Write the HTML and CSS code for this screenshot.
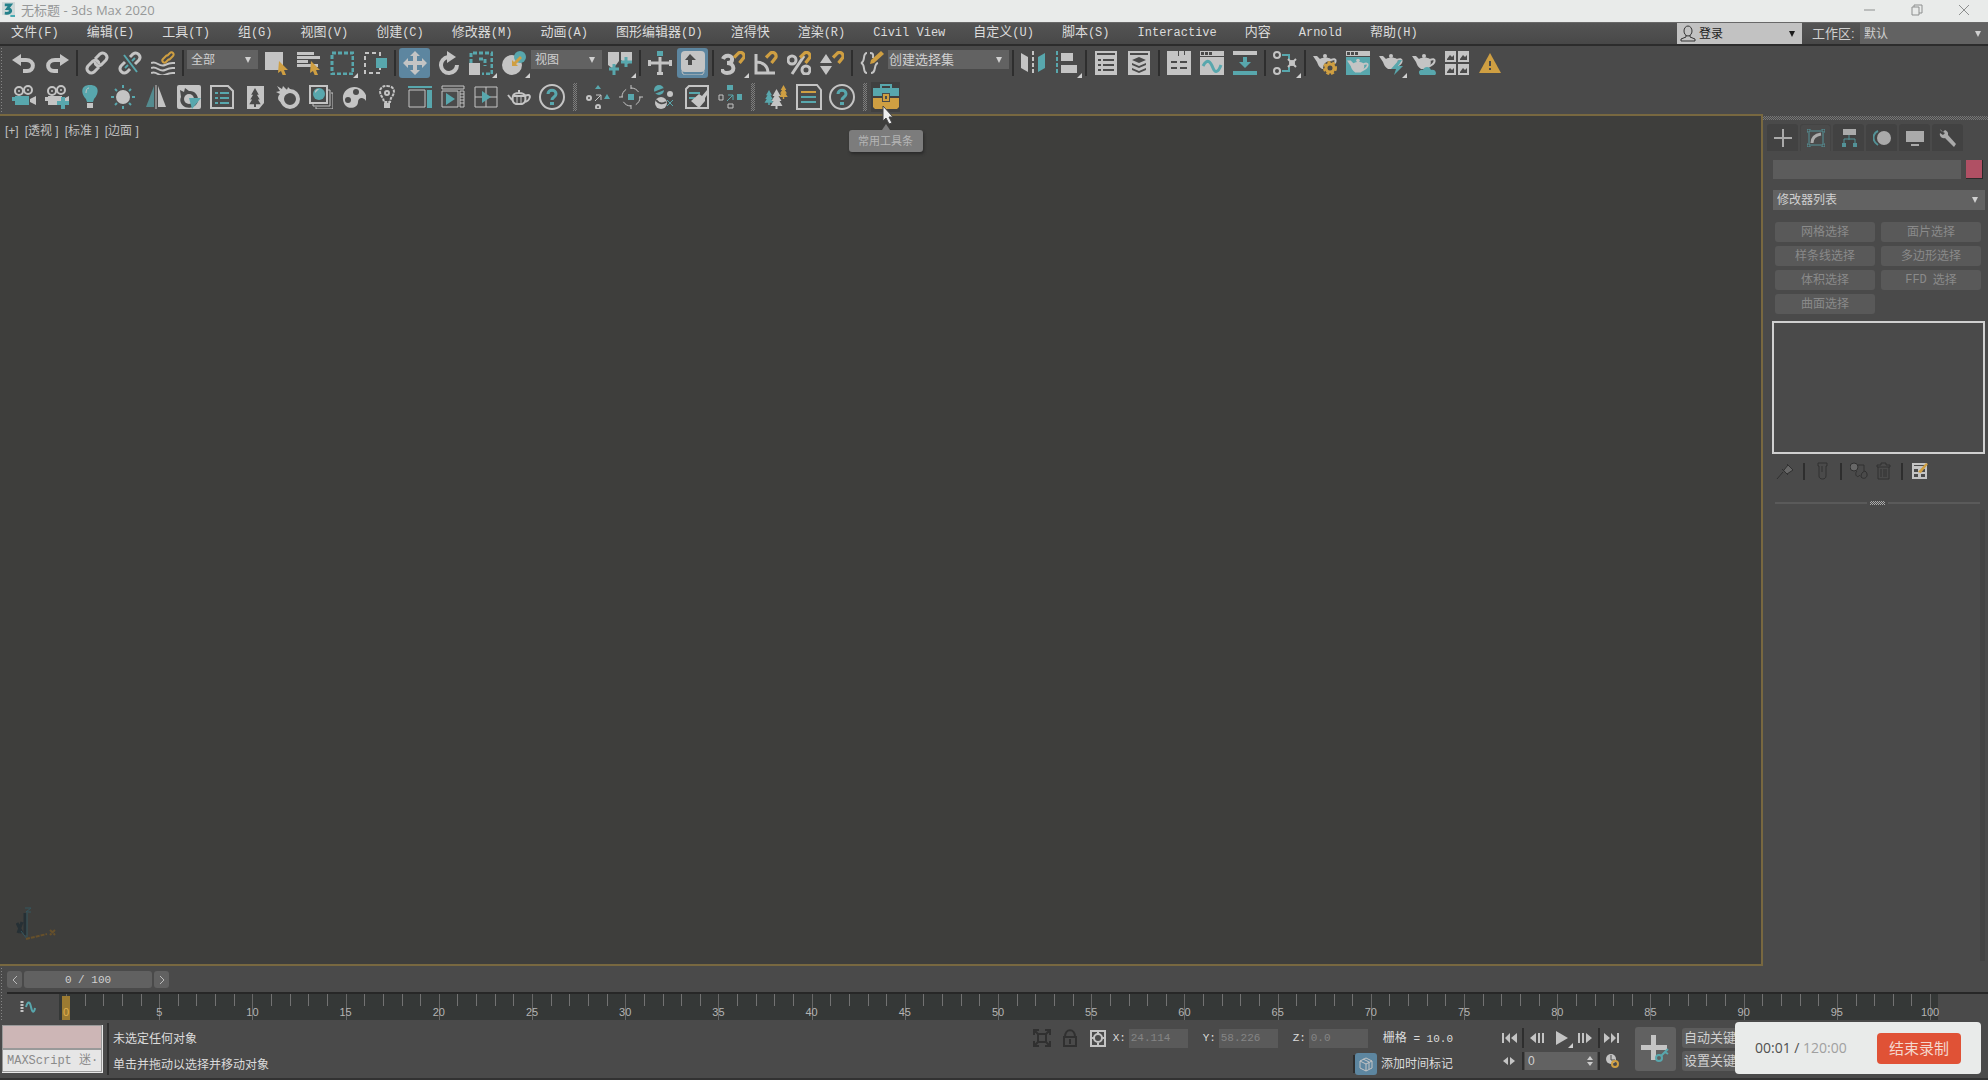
FILE: index.html
```
<!DOCTYPE html>
<html lang="zh-CN">
<head>
    <meta charset="UTF-8">
    <meta name="viewport" content="width=device-width, initial-scale=1.0">
    <title>无标题 - 3ds Max 2020</title>
    <link rel="stylesheet" href="styles.css">
</head>
<body>
    <svg class="defs" aria-hidden="true">
        <symbol id="teapot" viewBox="0 0 24 24">
            <path class="w" d="M0 5h4l3 3c3-2 8-2 11 0 2 4 0 8-3 10H9c-3-2-4-4-5-7z"/>
            <circle class="w" cx="12" cy="5" r="2"/>
            <path class="ws" d="M18 9c6-3 7 3-2 7"/>
        </symbol>
        <symbol id="magnet" viewBox="0 0 12 12">
            <path class="gs" stroke-width="3" d="M1 6l4-4c3-2 6 1 5 4l-4 5"/>
        </symbol>
        <symbol id="camera" viewBox="0 0 24 24">
            <circle class="ws" cx="7" cy="6" r="4"/><circle class="ws" cx="16" cy="5" r="4"/>
            <circle class="w" cx="7" cy="6" r="1"/><circle class="w" cx="16" cy="5" r="1"/>
            <path d="M3 11h14v9H3zM0 12h3v4H0z"/>
            <path class="w" d="M18 14l6-3v9l-6-3z"/>
        </symbol>
        <symbol id="help" viewBox="0 0 26 26">
            <circle class="ws" cx="13" cy="13" r="12"/>
            <path class="ts" stroke-width="3" d="M9 10c0-5 8-5 8 0 0 3-4 3-4 6"/><path class="t" d="M11 18h4v3h-4z"/>
        </symbol>
        <symbol id="tree" viewBox="0 0 12 20">
            <path d="M6 0l4 7H8l3 5H9l3 5H7v3H5v-3H0l3-5H1l3-5H2z"/>
        </symbol>
    </svg>

    <header class="titlebar">
        <svg class="logo" viewBox="0 0 14 16"><path fill="#cfd8d8" d="M0 0h14v14H0z"/><path fill="none" stroke="#23808a" stroke-width="3" d="M3 3h6l-3 4c5 0 5 6-3 5"/><path fill="#39a5ad" d="M9 14h5v2H9z"/></svg>
        <h1>无标题 - 3ds Max 2020</h1>
        <div class="window-buttons">
            <button aria-label="最小化"><svg viewBox="0 0 12 12"><path d="M0 6h11"/></svg></button>
            <button aria-label="还原"><svg viewBox="0 0 12 12"><path d="M1 3h7v8H1zM3 3V1h8v8H8"/></svg></button>
            <button aria-label="关闭"><svg viewBox="0 0 12 12"><path d="M1 1l10 10M11 1L1 11"/></svg></button>
        </div>
    </header>

    <div class="menubar">
        <nav class="menu">
            <a href="#">文件<span>(F)</span></a>
            <a href="#">编辑<span>(E)</span></a>
            <a href="#">工具<span>(T)</span></a>
            <a href="#">组<span>(G)</span></a>
            <a href="#">视图<span>(V)</span></a>
            <a href="#">创建<span>(C)</span></a>
            <a href="#">修改器<span>(M)</span></a>
            <a href="#">动画<span>(A)</span></a>
            <a href="#">图形编辑器<span>(D)</span></a>
            <a href="#">渲得快</a>
            <a href="#">渲染<span>(R)</span></a>
            <a href="#"><span>Civil View</span></a>
            <a href="#">自定义<span>(U)</span></a>
            <a href="#">脚本<span>(S)</span></a>
            <a href="#"><span>Interactive</span></a>
            <a href="#">内容</a>
            <a href="#"><span>Arnold</span></a>
            <a href="#">帮助<span>(H)</span></a>
        </nav>
        <button class="login">
            <svg viewBox="0 0 16 18"><ellipse cx="8" cy="6" rx="4" ry="5"/><path d="M6 10v2l-5 2v2h14v-2l-5-2v-2"/></svg>
            登录
        </button>
        <label class="workspace-label" for="workspace">工作区:</label>
        <div class="combo workspace"><select id="workspace"><option>默认</option></select></div>
    </div>

    <div class="toolbars">
        <div class="toolbar">
            <button aria-label="撤消"><svg viewBox="0 0 24 24"><path class="w" d="M0 9l9-6v12z"/><path class="ws" stroke-width="4" d="M7 9h7c9 0 9 11 1 11h-4"/></svg></button>
            <button aria-label="重做"><svg viewBox="0 0 24 24"><path class="w" d="M24 9l-9-6v12z"/><path class="ws" stroke-width="4" d="M17 9h-7c-9 0-9 11-1 11h4"/></svg></button>
            <i class="sep"></i>
            <button aria-label="链接"><svg viewBox="0 0 24 24"><path class="ws" stroke-width="3" d="M10 8l5-5c4-3 9 2 6 6l-5 5c-3 2-6 0-6-3M14 16l-5 5c-4 3-9-2-6-6l5-5c3-2 6 0 6 3"/></svg></button>
            <button aria-label="取消链接"><svg viewBox="0 0 24 24"><path class="ws" stroke-width="3" d="M12 6l3-3c4-3 9 2 6 6l-4 4M12 18l-3 3c-4 3-9-2-6-6l4-4"/><path class="ts" d="M6 4l13 17M17 7l-3 3M10 14l-3 3"/></svg></button>
            <button aria-label="绑定到空间扭曲"><svg viewBox="0 0 24 24"><path class="ws" d="M0 12c6-3 8 5 14 2s7-2 10-2M0 17c6-3 8 5 14 2s7-2 10-2M0 22c6-3 8 5 14 2s7-2 10-2"/><path class="gs" d="M16 5l3-3c2-2 5 1 3 3l-4 4M18 8l-3 3c-2 2-5-1-3-3l4-4"/></svg></button>
            <i class="sep"></i>
            <div class="combo filter"><select aria-label="选择过滤器"><option>全部</option></select></div>
            <button aria-label="选择对象"><svg viewBox="0 0 24 24"><path class="w" d="M1 1h18v18H1z"/><path class="g" d="M15 10l9 9h-4l2 5-3 1-2-5-3 2z"/></svg></button>
            <button aria-label="按名称选择"><svg viewBox="0 0 24 24"><path class="w" d="M0 1h17v3H0zM0 5h23v3H0zM0 9h11v3H0zM0 13h21v3H0z"/><path class="g" d="M14 10l9 9h-4l2 5-3 1-2-5-3 2z"/></svg></button>
            <button class="flyout" aria-label="矩形选择区域"><svg viewBox="0 0 24 24"><path class="ts" stroke-width="3" stroke-dasharray="4 2" d="M2 2h21v21H2z"/></svg></button>
            <button aria-label="窗口/交叉"><svg viewBox="0 0 24 24"><path class="ws" stroke-dasharray="4 3" d="M2 2h15v20H2z"/><path class="t" d="M13 7h11v10H13z"/></svg></button>
            <i class="sep"></i>
            <button class="active" aria-label="选择并移动"><svg viewBox="0 0 24 24"><path class="w" d="M12 0l5 5h-3v5h5V7l5 5-5 5v-3h-5v5h3l-5 5-5-5h3v-5H5v3l-5-5 5-5v3h5V5H7z"/></svg></button>
            <button aria-label="选择并旋转"><svg viewBox="0 0 24 24"><path class="ws" stroke-width="4" d="M12 6a8 8 0 1 0 9 8"/><path class="w" d="M11 0l9 6-9 6z"/></svg></button>
            <button class="flyout" aria-label="选择并缩放"><svg viewBox="0 0 24 24"><path class="ts" stroke-width="3" stroke-dasharray="4 2" d="M2 12V2h21v21H13M10 8h6v7"/><path class="w" d="M0 12h11v12H0z"/></svg></button>
            <button class="flyout" aria-label="选择并放置"><svg viewBox="0 0 24 24"><circle class="w" cx="10" cy="14" r="10"/><circle class="t" cx="18" cy="6" r="6"/><path class="g" d="M18 5l2 2-6 6 2 2h-6V9l2 2z"/></svg></button>
            <div class="combo filter"><select aria-label="参考坐标系"><option>视图</option></select></div>
            <button class="flyout" aria-label="使用轴点中心"><svg viewBox="0 0 24 24"><path class="w" d="M0 1h11v9l-3 4-4 3-4-3zM13 1h11v10l-6 2-5-4z"/><path class="ts" stroke-width="3" d="M6 13v11M1 18h10M18 6v10M13 11h11"/></svg></button>
            <i class="sep"></i>
            <button aria-label="选择并操纵"><svg viewBox="0 0 24 24"><path class="ws" stroke-width="3" d="M0 12h24M12 6v18"/><path class="w" d="M0 9h3v6H0zM21 9h3v6h-3zM9 21h6v3H9z"/><path class="t" d="M9 0h6v5H9z"/></svg></button>
            <button class="active" aria-label="键盘快捷键覆盖切换"><svg viewBox="0 0 24 24"><rect class="w" x="0" y="0" width="24" height="21" rx="4"/><path class="ws" stroke-width="1" d="M1 20c0 3 2 4 4 4h14c3 0 4-2 4-4"/><path fill="#4a4a4a" d="M9 3l6 6h-4v5H7V9H4z"/></svg></button>
            <i class="sep"></i>
            <button class="flyout" aria-label="捕捉开关"><svg viewBox="0 0 24 24"><path class="ws" stroke-width="4" d="M2 8c2-5 10-4 9 1 0 2-2 3-5 3 8 0 9 10 0 10-3 0-5-2-5-4"/><use href="#magnet" x="12" y="0" width="13" height="13"/></svg></button>
            <button aria-label="角度捕捉"><svg viewBox="0 0 24 24"><path class="ws" stroke-width="3" d="M2 3v19h19M2 11c7 0 12 4 12 11"/><use href="#magnet" x="11" y="0" width="13" height="13"/></svg></button>
            <button aria-label="百分比捕捉"><svg viewBox="0 0 24 24"><circle class="ws" stroke-width="3" cx="5" cy="9" r="4"/><circle class="ws" stroke-width="3" cx="19" cy="19" r="4"/><path class="ws" stroke-width="3" d="M5 23L17 5"/><use href="#magnet" x="12" y="0" width="13" height="13"/></svg></button>
            <button aria-label="微调器捕捉"><svg viewBox="0 0 24 24"><path class="w" d="M0 12l6-9 6 9zM0 15h12l-6 9z"/><use href="#magnet" x="12" y="0" width="13" height="13"/></svg></button>
            <i class="sep"></i>
            <button aria-label="编辑命名选择集"><svg viewBox="0 0 24 24"><path class="ws" d="M7 2C2 2 6 11 1 12c5 1 1 10 6 10M11 22c6 0 2-9 7-10M10 2c4 0 3 2 3 5"/><path class="g" d="M10 13l1-4 10-9 3 3-10 9z"/></svg></button>
            <div class="combo sets"><select aria-label="命名选择集"><option>创建选择集</option></select></div>
            <i class="sep"></i>
            <button aria-label="镜像"><svg viewBox="0 0 24 24"><path class="w" d="M0 2l7 4v15l-7-4z"/><path class="t" d="M24 2l-7 4v15l7-4z"/><path class="ws" stroke-dasharray="4 2" d="M12 0v24"/></svg></button>
            <button class="flyout" aria-label="对齐"><svg viewBox="0 0 24 24"><path class="ts" stroke-dasharray="4 2" d="M3 0v24"/><path class="w" d="M7 2h12v8H7zM7 14h16v8H7z"/></svg></button>
            <i class="sep"></i>
            <button aria-label="场景资源管理器"><svg viewBox="0 0 24 24"><path class="w" d="M1 0h22v24H1z"/><path class="bg" d="M3 2h18v2H3zM4 8h3v2H4zM9 8h11v2H9zM4 13h3v2H4zM9 13h11v2H9zM4 18h3v2H4zM9 18h11v2H9z"/></svg></button>
            <button aria-label="层资源管理器"><svg viewBox="0 0 24 24"><path class="w" d="M1 0h22v24H1z"/><path class="bg" d="M3 2h18v2H3zM12 6l7 3-7 3-7-3zM5 12l7 3 7-3v2l-7 3-7-3zM5 17l7 3 7-3v2l-7 3-7-3z"/></svg></button>
            <i class="sep"></i>
            <button aria-label="功能区"><svg viewBox="0 0 24 24"><path class="w" d="M0 0h11v5h1V0h5v4h1V0h6v24H0z"/><path class="bg" d="M4 10h6v2H4zM13 10h7v2h-7zM4 16h6v2H4zM13 16h7v2h-7z"/></svg></button>
            <button aria-label="曲线编辑器"><svg viewBox="0 0 24 24"><path class="w" d="M0 0h24v24H0z"/><path class="bg" d="M1 1h3v3H1zM5 1h3v3H5zM9 1h3v3H9zM0 5h24v1H0z"/><path class="ts" stroke-width="3" d="M3 15c5-9 8-3 10 2s5 5 8-3"/></svg></button>
            <button aria-label="摄影表"><svg viewBox="0 0 24 24"><path class="w" d="M0 0h24v4H0z"/><path class="t" d="M0 20h24v4H0zM10 6h4v5h4l-6 6-6-6h4z"/></svg></button>
            <i class="sep"></i>
            <button class="flyout" aria-label="图解视图"><svg viewBox="0 0 24 24"><circle class="ws" cx="4" cy="4" r="3"/><circle class="ws" cx="4" cy="20" r="3"/><path class="ts" d="M9 4h7v4M9 20h7v-4"/><path class="ws" d="M15 8l8 8M23 8l-8 8"/><circle class="w" cx="19" cy="12" r="3"/></svg></button>
            <i class="sep"></i>
            <button aria-label="渲染设置"><svg viewBox="0 0 24 24"><use href="#teapot"/><circle class="bg" cx="17" cy="17" r="7"/><circle class="gs" cx="17" cy="17" r="4" stroke-width="3"/><circle class="gs" cx="17" cy="17" r="6" stroke-dasharray="3 2"/></svg></button>
            <button aria-label="渲染帧窗口"><svg viewBox="0 0 24 24"><path class="w" d="M0 0h24v5H0z"/><path class="bg" d="M1 1h3v3H1zM5 1h3v3H5zM9 1h3v3H9z"/><path class="t" d="M0 6h24v18H0z"/><use href="#teapot" x="1" y="5" width="22" height="22"/></svg></button>
            <button class="flyout" aria-label="渲染产品"><svg viewBox="0 0 24 24"><use href="#teapot"/><path class="t" d="M20 9l-8 9h5l-2 6 9-9h-5l4-6z"/></svg></button>
            <button aria-label="在云中渲染"><svg viewBox="0 0 24 24"><use href="#teapot"/><path class="t" d="M8 24c-3-4 1-6 3-5 1-4 7-4 8 0 5-1 6 4 4 5z"/></svg></button>
            <button aria-label="打开库"><svg viewBox="0 0 24 24"><path class="w" d="M0 0h11v11H0zM13 0h11v11H13zM0 13h11v11H0zM13 13h11v11H13z"/><path class="bg" d="M2 8l3-4 2 2 2-2v5H2zM15 8l3-4 2 2 2-2v5h-7zM2 21l3-4 2 2 2-2v5H2zM15 21l3-4 2 2 2-2v5h-7z"/></svg></button>
            <button aria-label="警告"><svg viewBox="0 0 24 24"><path class="g" d="M12 2l11 20H1z"/><path class="bg" d="M11 10h2v5h-2zM11 17h2v2h-2z"/></svg></button>
        </div>

        <div class="toolbar">
            <button aria-label="摄影机"><svg class="t" viewBox="0 0 24 24"><use href="#camera"/></svg></button>
            <button aria-label="添加摄影机"><svg class="w" viewBox="0 0 24 24"><use href="#camera"/><path class="ts" stroke-width="4" d="M18 12v12M12 18h12"/></svg></button>
            <button aria-label="灯光"><svg viewBox="0 0 24 24"><path class="t" d="M12 0c10 0 9 9 4 14l-1 3H9l-1-3C3 9 2 0 12 0z"/><path class="w" d="M9 18h6v5H9z"/><path class="ws" stroke-width="1" d="M8 8c0-3 1-5 3-5"/></svg></button>
            <button aria-label="太阳光"><svg viewBox="0 0 24 24"><circle class="w" cx="12" cy="12" r="7"/><path class="ts" d="M12 0v3M12 21v3M0 12h3M21 12h3M4 4l2 2M18 18l2 2M20 4l-2 2M6 18l-2 2"/></svg></button>
            <button aria-label="对称"><svg viewBox="0 0 24 24"><path class="t" d="M10 1v21H2z" opacity=".7"/><path class="w" d="M14 1v21h8z"/><path class="ws" stroke-width="1" d="M12 0v24"/></svg></button>
            <button aria-label="材质转换"><svg viewBox="0 0 24 24"><rect class="w" width="24" height="24" rx="2"/><path class="bg" d="M3 5l4 2 1-4 4 3c9-1 13 12 4 16-8 3-15-4-12-10z"/><circle class="w" cx="12" cy="14" r="5"/><path class="t" d="M12 13h12l-9 11z"/></svg></button>
            <button aria-label="列表"><svg viewBox="0 0 24 24"><path class="ws" d="M1 1h17l5 5v17H1z"/><path class="ts" d="M5 8h3M10 8h9M5 13h3M10 13h9M5 18h3M10 18h9"/></svg></button>
            <button aria-label="植物"><svg viewBox="0 0 24 24"><path class="w" d="M4 1h17v17l-5 6H4z"/><svg class="bg" x="6" y="3" width="12" height="19"><use href="#tree"/></svg></svg></button>
            <button aria-label="环"><svg viewBox="0 0 24 24"><circle class="ws" stroke-width="4" cx="14" cy="14" r="8"/><path class="w" d="M1 1l5 3 1-3 4 4 1-3 4 4-9 5-1 7C0 15 2 11 4 9L0 7l4-1z"/></svg></button>
            <button aria-label="材质库"><svg viewBox="0 0 24 24"><path class="ws" stroke-width="1" d="M4 19v2h17V5h-2M7 22v2h17V8h-2"/><path class="ws" d="M1 1h17v17H1z"/><circle class="t" cx="10" cy="9" r="6"/><path class="w" d="M6 8c0-3 1-4 4-4z"/></svg></button>
            <button aria-label="调色板"><svg viewBox="0 0 24 24"><path class="w" d="M3 20C-4 8 8-1 17 3c5 2 9 8 7 13-3-5-8-3-8 1 0 6-9 8-13 3z"/><circle class="bg" cx="6" cy="15" r="3"/><circle class="bg" cx="14" cy="7" r="3"/></svg></button>
            <button aria-label="灯泡"><svg viewBox="0 0 24 24"><path class="ws" stroke-dasharray="3 1" d="M12 1c9 0 8 8 4 12l-1 4H9l-1-4C4 9 3 1 12 1z"/><circle class="ws" cx="12" cy="8" r="2"/><path class="w" d="M9 18h6v5H9z"/></svg></button>
            <button aria-label="面板"><svg viewBox="0 0 24 24"><path class="ws" stroke-width="1" d="M1 5h16v17H1z"/><path class="t" d="M0 1h24v2H0zM19 5h5v18h-5z"/></svg></button>
            <button aria-label="播放窗口"><svg viewBox="0 0 24 24"><path class="ws" stroke-width="1" d="M1 1h22v3H1zM1 6h16v16H1zM19 6h4v16h-4zM19 9h4M19 12h4M19 15h4M19 18h4"/><path class="t" d="M5 8l9 6-9 6z"/></svg></button>
            <button aria-label="视口播放"><svg viewBox="0 0 24 24"><path class="ws" stroke-width="1" d="M1 2h22v20H1zM12 2v20M1 12h22"/><path class="t" d="M8 6l9 6-9 6z"/></svg></button>
            <button aria-label="茶壶"><svg viewBox="0 0 24 24"><path class="ws" d="M5 15L1 10M6 11c1-4 11-4 12 0 1 4 0 7-3 8H9c-3-1-4-4-3-8zM18 11c8-4 5 6-1 6M7 11h11M12 5v3"/><path class="ws" stroke-width="1" d="M10 12v6M14 12v6"/></svg></button>
            <button aria-label="帮助"><svg class="large" viewBox="0 0 26 26"><use href="#help"/></svg></button>
            <i class="grip"></i>
            <button aria-label="散布"><svg viewBox="0 0 24 24"><path class="t" d="M12 0l3 4H9zM21 9l3 5h-6z"/><circle class="ws" cx="3" cy="13" r="2"/><circle class="ws" cx="12" cy="22" r="2"/><path class="ws" stroke-width="1" d="M9 16l6-6M10 10h5v5"/></svg></button>
            <button aria-label="聚焦"><svg viewBox="0 0 24 24"><circle class="ws" stroke-width="1" cx="12" cy="12" r="9" stroke-dasharray="9 5"/><path class="ws" stroke-width="1" d="M12 0v4M12 20v4M0 12h4M20 12h4"/><path class="t" d="M9 9h6v6H9z"/></svg></button>
            <button aria-label="球体替换"><svg viewBox="0 0 24 24"><circle class="t" cx="7" cy="5" r="5"/><circle class="w" cx="18" cy="9" r="3"/><circle class="w" cx="9" cy="18" r="6"/><path class="ts" stroke-width="1" d="M15 15l6 6M21 15l-6 6"/><path class="bgs" d="M2 8l10-4M4 15c3 4 7 4 10 2"/></svg></button>
            <button aria-label="清理"><svg viewBox="0 0 24 24"><path class="ws" d="M4 1h19v22H1V4z"/><path class="ts" d="M4 8h11M4 13h6"/><path class="w" d="M6 16l8-7 3 2 5-6 2 2-4 6v3l-6 7z"/></svg></button>
            <button aria-label="阵列"><svg viewBox="0 0 24 24"><path class="t" d="M9 0h6v5H9zM19 9h5v6h-5z"/><path class="ws" stroke-width="1" d="M1 10h4v5H1zM10 19h5v4h-5z"/><path class="ts" stroke-width="1" d="M9 16l6-6M10 10h5v5"/></svg></button>
            <i class="grip"></i>
            <button aria-label="森林"><svg viewBox="0 0 24 24"><svg class="t" x="0" y="5" width="10" height="15"><use href="#tree"/></svg><svg class="g" x="15" y="0" width="9" height="14"><use href="#tree"/></svg><svg class="w" x="6" y="4" width="13" height="20"><use href="#tree"/></svg></svg></button>
            <button aria-label="日志"><svg class="large" viewBox="0 0 26 26"><path class="ws" d="M1 1h20l4 5v19H1z"/><path class="gs" d="M5 8h15"/><path class="ts" d="M5 13h15M5 18h15"/></svg></button>
            <button aria-label="帮助"><svg class="large" viewBox="0 0 26 26"><use href="#help"/></svg></button>
            <i class="grip"></i>
            <button class="toolbox" aria-describedby="toolbox-tip" aria-label="常用工具条">
                <svg class="large" viewBox="0 0 26 26"><path class="ts" d="M8 4V1h10v3"/><path class="t" d="M0 4h26v8H0z"/><path class="g" d="M0 14h26v9l-2 2H2l-2-2z"/><path class="bg" d="M9 9h8v9H9z"/><path class="gs" d="M11 11h4v5h-4z"/></svg>
                <svg class="cursor" viewBox="0 0 12 19"><path d="M1 1v15l3-3 3 6 3-1-3-6h4z"/></svg>
                <span class="tooltip" id="toolbox-tip" role="tooltip">常用工具条</span>
            </button>
        </div>
    </div>

    <main>
        <section class="viewport">
            <div class="viewport-labels">
                <button>[+]</button>
                <button>[透视 ]</button>
                <button>[标准 ]</button>
                <button>[边面 ]</button>
            </div>
            <svg class="axis" viewBox="0 0 42 36"><path stroke="#263035" stroke-width="3" d="M9 6v22M1 16l5 10M6 15L2 26"/><path stroke="#34565f" stroke-width="1" d="M11 6v24M9 1h6l-5 4h5M5 24l6 8"/><path stroke="#66502b" stroke-width="2" stroke-dasharray="4 1" d="M10 32l21-5M34 23l5 5M39 23l-5 5"/></svg>
        </section>

        <aside class="panel">
            <div class="tabs">
                <button aria-label="创建"><svg viewBox="0 0 18 18"><path class="ws" d="M9 0v18M0 9h18"/></svg></button>
                <button class="selected" aria-label="修改"><svg viewBox="0 0 18 18"><path class="ts" stroke-width="1" d="M2 4v10M16 4v10M4 2h10M4 16h10M0 0h3v3H0zM15 0h3v3h-3zM0 15h3v3H0zM15 15h3v3h-3z"/><path class="ws" stroke-width="3" d="M5 14c0-5 3-8 9-9"/></svg></button>
                <button aria-label="层次"><svg viewBox="0 0 18 18"><path class="w" d="M3 0h13v6H3z"/><path class="ts" stroke-width="1" d="M9 6v5M4 15v-5h11v5"/><path class="t" d="M2 14h4v4H2zM13 14h4v4h-4z"/></svg></button>
                <button aria-label="运动"><svg viewBox="0 0 18 18"><circle class="w" cx="11" cy="9" r="7"/><path class="ts" d="M5 2c-6 3-6 10 0 14"/></svg></button>
                <button aria-label="显示"><svg viewBox="0 0 18 18"><path class="w" d="M0 2h18v11H0zM5 15h8v2H5z"/></svg></button>
                <button aria-label="实用程序"><svg viewBox="0 0 18 18"><path class="w" d="M1 0l3 3 2-2C10 3 9 5 9 6l8 9-2 3-9-9C3 10 0 7 1 4l3 2 2-2-4-2z"/></svg></button>
            </div>
            <div class="object-name">
                <input type="text" aria-label="对象名称">
                <button class="swatch" aria-label="对象颜色"></button>
            </div>
            <div class="combo modifier-list"><select aria-label="修改器列表"><option>修改器列表</option></select></div>
            <div class="modifier-buttons">
                <button disabled>网格选择</button>
                <button disabled>面片选择</button>
                <button disabled>样条线选择</button>
                <button disabled>多边形选择</button>
                <button disabled>体积选择</button>
                <button disabled><span>FFD</span> 选择</button>
                <button disabled>曲面选择</button>
            </div>
            <div class="stack"></div>
            <div class="stack-tools">
                <button disabled aria-label="锁定堆栈"><svg viewBox="0 0 18 18"><path class="solid" d="M1 17l6-7M6 7l6 6M8 8l4-5 5 5-6 4M11 2l6 6"/></svg></button>
                <i class="sep"></i>
                <button disabled aria-label="显示最终结果"><svg viewBox="0 0 18 18"><path d="M5 1h9v3h-1v10c0 4-7 4-7 0V4H5zM9 4v6"/></svg></button>
                <i class="sep"></i>
                <button disabled aria-label="使唯一"><svg viewBox="0 0 18 18"><circle class="solid" cx="4" cy="5" r="4"/><path d="M8 3h6v6M7 9c-3 3 0 8 3 4M15 9c5 4 0 10-4 6 0-3 1-5 4-6z"/></svg></button>
                <button disabled aria-label="移除修改器"><svg viewBox="0 0 18 18"><path d="M3 5h13v-2h-4V1H7v2H3zM4 5v12h11V5M7 7v8M10 7v8M12 7v8"/></svg></button>
                <i class="sep"></i>
                <button aria-label="配置修改器集"><svg viewBox="0 0 18 18"><path class="w" d="M1 1h15v16H1z"/><path class="bg" d="M3 3h11v1H3zM3 7h4v3H3zM10 7h4v3h-4zM3 12h4v3H3zM10 12h4v3h-4z"/><path class="g" d="M7 10l8-9 2 1-7 9z"/></svg></button>
            </div>
            <div class="splitter"><i class="splitter-grip"></i></div>
            <div class="rollouts"></div>
        </aside>
    </main>

    <footer>
        <div class="timeline">
            <div class="time-slider">
                <button aria-label="上一帧"><svg viewBox="0 0 8 10"><path d="M6 1L2 5l4 4"/></svg></button>
                <button class="handle">0 / 100</button>
                <button aria-label="下一帧"><svg viewBox="0 0 8 10"><path d="M2 1l4 4-4 4"/></svg></button>
            </div>
            <div class="track">
                <button class="curve" aria-label="打开迷你曲线编辑器"><svg viewBox="0 0 16 14"><path class="ws" stroke-width="3" stroke-dasharray="2 1" d="M2 1v12"/><path class="ts" d="M6 7c2-7 4-5 5 0s3 7 4 1"/></svg></button>
                <div class="ruler" id="ruler"></div>
            </div>
        </div>

        <div class="status">
            <div class="script">
                <input type="text" class="macro" aria-label="宏录制器">
                <input type="text" value="MAXScript 迷·" aria-label="MAXScript 迷你侦听器">
            </div>
            <div class="messages">
                <p>未选定任何对象</p>
                <p>单击并拖动以选择并移动对象</p>
            </div>
            <div class="coords">
                <div class="coords-row">
                    <button class="dim" aria-label="孤立当前选择"><svg viewBox="0 0 18 18"><path d="M1 6V1h5M12 1h5v5M17 12v5h-5M6 17H1v-5M5 5h8v8H5zM2 2l4 4M16 2l-4 4M2 16l4-4M16 16l-4-4"/></svg></button>
                    <button class="dim" aria-label="选择锁定"><svg viewBox="0 0 18 18"><path d="M3 8h12v9H3zM4 8C4-1 14-1 14 8M9 10v5"/></svg></button>
                    <button aria-label="绝对模式"><svg viewBox="0 0 18 18"><path class="ws" d="M2 2h14v15H2zM9 2v3M9 14v3M2 9h3M13 9h3"/><circle class="ws" cx="9" cy="9" r="4"/></svg></button>
                    <div class="fields">
                        <label>X: <input type="text" value="24.114"></label>
                        <label>Y: <input type="text" value="58.226"></label>
                        <label>Z: <input type="text" value="0.0"></label>
                    </div>
                    <div>栅格<span class="grid-size"> = 10.0</span></div>
                </div>
                <div class="coords-row tag-row">
                    <i class="sep"></i>
                    <button class="active" aria-label="时间标记"><svg viewBox="0 0 18 18"><path class="ws" stroke-width="1" d="M9 3l6 3v7l-6 3-6-3V6zM3 6l6 3 6-3M9 9v7M6 4l6 3v7"/></svg></button>
                    <span>添加时间标记</span>
                </div>
            </div>
            <div class="playback">
                <button aria-label="转至开头"><svg viewBox="0 0 16 12"><path class="w" d="M1 1h2v10H1zM9 1v10L4 6zM16 1v10l-6-5z"/></svg></button>
                <i></i>
                <div class="play-buttons">
                    <button aria-label="上一帧"><svg viewBox="0 0 16 12"><path class="w" d="M7 1v10L1 6zM9 1h2v10H9zM13 1h2v10h-2z"/></svg></button>
                    <button class="flyout" aria-label="播放动画"><svg class="play" viewBox="0 0 14 14"><path class="w" d="M2 0l12 7-12 7z"/></svg></button>
                    <button aria-label="下一帧"><svg viewBox="0 0 16 12"><path class="w" d="M9 1v10l6-5zM1 1h2v10H1zM5 1h2v10H5z"/></svg></button>
                </div>
                <i></i>
                <button aria-label="转至结尾"><svg viewBox="0 0 16 12"><path class="w" d="M13 1h2v10h-2zM7 1v10l5-5zM0 1v10l6-5z"/></svg></button>
                <button aria-label="关键点模式切换"><svg viewBox="0 0 16 12"><path class="w" d="M7 2v8L2 6zM9 2v8l5-4z"/></svg></button>
                <i></i>
                <div class="frame"><input type="text" value="0" aria-label="当前帧"></div>
                <i></i>
                <button aria-label="时间配置"><svg class="play" viewBox="0 0 14 14"><circle class="w" cx="6" cy="5" r="5"/><path class="bgs" stroke-width="1" d="M6 1v5h4"/><circle class="gs" cx="10" cy="10" r="3"/></svg></button>
            </div>
            <button class="set-key" aria-label="设置关键点"><svg viewBox="0 0 30 30"><path class="w" d="M10 1h5v10h11v5H15v10h-5V16H0v-5h10z"/><circle class="ts" cx="18" cy="24" r="3"/><path class="ts" d="M20 22l7-7M24 18l3 2"/></svg></button>
            <div class="key-modes">
                <button>自动关键点</button>
                <button>设置关键点</button>
            </div>
        </div>
    </footer>

    <div class="recorder">
        <span class="elapsed">00:01 / <span class="limit">120:00</span></span>
        <button>结束录制</button>
    </div>

    <script>
        // one tick per frame, label every fifth
        const ruler = document.getElementById('ruler');
        for (let frame = 0; frame <= 100; frame++) {
            const tick = document.createElement('i');
            if (frame % 5 === 0) {
                tick.className = frame === 0 ? 'major current' : 'major';
                const label = document.createElement('span');
                label.textContent = frame;
                tick.appendChild(label);
            }
            ruler.appendChild(tick);
        }
    </script>
</body>
</html>
```
FILE: styles.css
```
* {
    box-sizing: border-box;
}
body {
    margin: 0;
    min-height: 100vh;
    display: flex;
    flex-direction: column;
    background-color: #4a4a4a;
    color: #d0d0d0;
    font-family: "Liberation Sans", "Noto Sans CJK SC", sans-serif;
    font-size: 12px;
    line-height: 16px;
    overflow: hidden;
}
button, input, select {
    font: inherit;
    color: inherit;
    margin: 0;
    padding: 0;
    border: 0;
    border-radius: 0;
    background: none;
}
button {
    display: flex;
    align-items: center;
    justify-content: center;
}
p {
    margin: 0;
}

/* icon colours */
.defs {
    position: absolute;
    width: 0;
    height: 0;
}
.w { fill: #c4c4c4; }
.t { fill: #58a7ad; }
.g { fill: #cf9f42; }
.bg { fill: #4a4a4a; }
.ws, .ts, .gs, .bgs {
    fill: none;
    stroke-width: 2;
}
.ws { stroke: #c4c4c4; }
.ts { stroke: #58a7ad; }
.gs { stroke: #cf9f42; }
.bgs { stroke: #4a4a4a; }
[stroke-width="1"] { stroke-width: 1; }
[stroke-width="3"] { stroke-width: 3; }
[stroke-width="4"] { stroke-width: 4; }

/* title and menu */
.titlebar {
    height: 22px;
    display: flex;
    align-items: center;
    padding: 0 1px 3px 2px;
    background-color: #e9ebea;
    color: #969898;
}
.logo {
    width: 13px;
    height: 15px;
    margin-right: 6px;
}
.titlebar h1 {
    flex: 1;
    margin: 0;
    font-family: "Open Sans", "Noto Sans CJK SC", sans-serif;
    font-size: 13px;
    font-weight: normal;
}
.window-buttons {
    display: flex;
}
.window-buttons button {
    width: 47px;
    height: 18px;
}
.window-buttons svg {
    width: 12px;
    height: 12px;
    fill: none;
    stroke: #8d8f8f;
}
.menubar {
    height: 24px;
    display: flex;
    border-top: 1px solid #686868;
    border-bottom: 2px solid #2c2c2c;
    background: linear-gradient(#545454, #484848);
}
.menu {
    flex: 1;
    display: flex;
    gap: 28px;
    padding-left: 11px;
    font-size: 13px;
    line-height: 18px;
}
.menu a {
    color: #dcdcdc;
    text-decoration: none;
    white-space: nowrap;
}
.menu span, .modifier-buttons span {
    font-family: "Liberation Mono", monospace;
    font-size: 12px;
}
.login {
    position: relative;
    width: 125px;
    justify-content: flex-start;
    gap: 3px;
    padding-left: 3px;
    background-color: #c2c2c2;
    color: #1c1c1c;
}
.login svg {
    width: 16px;
    height: 18px;
    fill: none;
    stroke: #333;
}
.workspace-label {
    width: 58px;
    padding-left: 10px;
    font-size: 13px;
    line-height: 22px;
}

/* drop-downs */
.combo {
    position: relative;
    background-color: #626262;
}
.combo select {
    display: block;
    width: 100%;
    height: 100%;
    padding-left: 4px;
    appearance: none;
}
.combo::after, .login::after {
    content: "";
    position: absolute;
    right: 7px;
    top: calc(50% - 3px);
    border: solid transparent;
    border-width: 6px 3px 0;
    border-top-color: #d0d0d0;
}
.login::after {
    border-top-color: #1c1c1c;
}
.workspace {
    width: 128px;
}

/* toolbars */
.toolbars {
    height: 68px;
    padding-left: 7px;
    background: radial-gradient(#858585 1px, transparent 1px) 0 4px / 3px 3px repeat-y;
}
.toolbar {
    height: 34px;
    display: flex;
    align-items: center;
}
.toolbar button {
    position: relative;
    width: 33px;
    height: 30px;
    flex: none;
}
.toolbar button > svg {
    width: 24px;
    height: 24px;
    flex: none;
}
.toolbar button > .large {
    width: 26px;
    height: 26px;
}
.toolbar .active, .tag-row .active {
    background-color: #5d86a0;
    border-radius: 3px;
}
.toolbar .active {
    width: 31px;
    margin: 0 1px;
}
.sep {
    width: 3px;
    height: 26px;
    margin: 0 2px;
    flex: none;
    background-color: #2e2e2e;
    border-left: 1px solid #4a4a4a;
}
.flyout::after {
    content: "";
    position: absolute;
    right: 0;
    bottom: 0;
    border: solid transparent;
    border-width: 0 0 5px 5px;
    border-bottom-color: #d0d0d0;
}
.filter, .sets {
    width: 71px;
    height: 19px;
    margin: 4px 1px 0;
    align-self: flex-start;
}
.sets {
    width: 121px;
    margin: 4px 0 0;
    font-size: 13px;
}
.toolbar .sets select {
    padding-left: 1px;
}
.grip {
    width: 4px;
    height: 28px;
    margin: 0 4px 0 5px;
    flex: none;
    background: conic-gradient(#7e7e7e 25%, transparent 0 50%, #7e7e7e 0 75%, transparent 0) 0 0 / 2px 2px;
}
.toolbar .toolbox {
    width: 29px;
    background-color: #404040;
}
.toolbar .toolbox > .cursor {
    position: absolute;
    left: 11px;
    top: 23px;
    z-index: 2;
    width: 12px;
    height: 19px;
    fill: #eee;
    stroke: #444;
}
.tooltip {
    position: absolute;
    left: 50%;
    top: 48px;
    width: 74px;
    transform: translateX(-50%);
    border-radius: 3px;
    background-color: #7c7c7c;
    box-shadow: 1px 2px 3px #2a2a2a;
    color: #b5b5b5;
    font-size: 11px;
    line-height: 22px;
    text-align: center;
    z-index: 1;
}
.tooltip::before {
    content: "";
    position: absolute;
    left: 33px;
    top: -6px;
    border: solid transparent;
    border-width: 0 4px 6px;
    border-bottom-color: #7c7c7c;
}

/* viewport */
main {
    flex: 1;
    display: flex;
}
.viewport {
    flex: 1;
    display: flex;
    flex-direction: column;
    justify-content: space-between;
    border: 2px solid #786840;
    border-left: 0;
    background-color: #3e3e3c;
}
.viewport-labels {
    display: flex;
    gap: 6px;
    padding: 7px 5px;
    color: #c0c0c0;
}
.axis {
    width: 42px;
    height: 36px;
    margin: 0 0 21px 16px;
    fill: none;
}

/* command panel */
.panel {
    width: 225px;
    display: flex;
    flex-direction: column;
    padding: 10px 3px 0 4px;
    background: conic-gradient(#777 25%, transparent 0 50%, #777 0 75%, transparent 0) 6px 2px / 2px 2px repeat-x,
        conic-gradient(#777 25%, transparent 0 50%, #777 0 75%, transparent 0) 6px 4px / 2px 2px repeat-x;
}
.tabs {
    display: flex;
    gap: 2px;
    margin-bottom: 9px;
}
.tabs button {
    width: 31px;
    height: 27px;
    border-radius: 3px 3px 0 0;
    background-color: #424242;
}
.tabs .selected {
    background-color: #4a4a4a;
    border: 1px solid #444;
    border-bottom: 0;
}
.tabs svg {
    width: 18px;
    height: 18px;
    opacity: .8;
}
.object-name {
    display: flex;
    justify-content: space-between;
    height: 19px;
    margin: 0 2px 11px 6px;
}
.object-name input {
    width: 188px;
    background-color: #5c5c5c;
}
.swatch {
    width: 17px;
    background-color: #b05064;
    border: solid #2b2b2b;
    border-width: 0 1px 1px 0;
}
.modifier-list {
    height: 20px;
    margin: 0 0 12px 6px;
}
.modifier-buttons {
    display: grid;
    grid-template-columns: 1fr 1fr;
    gap: 4px 6px;
    margin: 0 4px 7px 8px;
}
.modifier-buttons button {
    height: 20px;
    gap: 6px;
    border-radius: 3px;
    background-color: #595959;
    color: #8a8a8a;
}
.stack {
    height: 133px;
    margin-left: 5px;
    border: 2px solid #d0d0d0;
}
.stack-tools {
    display: flex;
    align-items: center;
    height: 20px;
    margin: 7px 0 20px 6px;
}
.stack-tools button {
    width: 24px;
}
.stack-tools .sep {
    height: 17px;
    margin: 0 5px;
}
.stack-tools svg {
    width: 18px;
    height: 18px;
}
.stack-tools :disabled svg {
    fill: none;
    stroke: #303030;
}
.stack-tools .solid {
    fill: #686868;
}
.splitter {
    display: flex;
    align-items: center;
    gap: 3px;
    height: 4px;
    margin: 0 5px 5px 8px;
}
.splitter::before, .splitter::after {
    content: "";
    flex: 1;
    height: 2px;
    background-color: #5a5a5a;
}
.splitter-grip {
    width: 15px;
    height: 4px;
    background: conic-gradient(#aaa 25%, transparent 0 50%, #aaa 0 75%, transparent 0) 0 0 / 2px 2px;
}
.rollouts {
    flex: 1;
    margin-bottom: 5px;
    border-right: 5px solid #434343;
}

/* time slider */
.timeline {
    height: 54px;
    padding-left: 7px;
    background: radial-gradient(#858585 1px, transparent 1px) 0 7px / 3px 3px repeat-y;
}
.time-slider {
    display: flex;
    gap: 2px;
    height: 26px;
    padding: 5px 0 4px;
}
.time-slider button {
    width: 15px;
    border-radius: 3px;
    background-color: #616161;
}
.time-slider .handle {
    width: 128px;
    font-family: "Liberation Mono", monospace;
    font-size: 11px;
}
.time-slider svg {
    width: 8px;
    height: 10px;
    fill: none;
    stroke: #bbb;
}
.track {
    display: flex;
    height: 28px;
    border-top: 2px solid #272727;
}
.curve {
    width: 52px;
    padding-right: 10px;
}
.curve svg {
    width: 16px;
    height: 14px;
}
.ruler {
    flex: 1;
    display: flex;
    justify-content: space-between;
    margin-right: 50px;
    padding: 0 6px 0 7px;
    background-color: #353837;
}
.ruler i {
    width: 1px;
    height: 12px;
    background-color: #727272;
    font-style: normal;
}
.ruler .major {
    position: relative;
    height: 26px;
    background-color: #686868;
}
.ruler span {
    position: absolute;
    left: -10px;
    top: 11px;
    width: 20px;
    text-align: center;
    font-size: 11px;
    line-height: 15px;
    color: #b4b4b4;
}
.ruler .current::before {
    content: "";
    position: absolute;
    left: -4px;
    top: 2px;
    width: 8px;
    height: 24px;
    background-color: #9c7b32;
}
.ruler .current span {
    color: #e0b04c;
}

/* status bar */
.status {
    display: flex;
    height: 60px;
    border-bottom: 2px solid #323232;
}
.script {
    width: 101px;
    height: 48px;
    margin: 5px 0 0 2px;
    display: flex;
    flex-direction: column;
    border: solid #e6e6e6;
    border-width: 0 1px 1px 0;
}
.script input {
    width: 100%;
    height: 24px;
    padding: 0 0 3px 4px;
    border: 1px solid #999;
    background-color: #e6e6e6;
    color: #8a8a8a;
    font-family: "Liberation Mono", "Noto Sans CJK SC", monospace;
    font-size: 12px;
}
.script .macro {
    background-color: #cdb6b6;
}
.messages {
    flex: 1;
    margin: 3px 0 3px 4px;
    padding: 8px 0 0 4px;
    border-left: 2px solid #2e2e2e;
    color: #dcdcdc;
}
.messages p {
    margin-bottom: 10px;
}
.coords {
    padding-top: 7px;
    margin-right: 44px;
    color: #dcdcdc;
}
.coords-row {
    display: flex;
    align-items: center;
    gap: 10px;
    height: 22px;
    white-space: nowrap;
}
.coords-row button {
    width: 18px;
}
.coords-row svg {
    width: 18px;
    height: 18px;
    flex: none;
}
.dim svg {
    fill: none;
    stroke: #303030;
    stroke-width: 2;
}
.fields {
    display: flex;
    gap: 15px;
    margin: 0 5px 0 -4px;
}
.fields label, .grid-size {
    font-family: "Liberation Mono", monospace;
    font-size: 11px;
}
.fields label {
    display: flex;
    align-items: center;
    justify-content: space-between;
    width: 75px;
}
.fields input {
    width: 59px;
    height: 19px;
    padding-left: 2px;
    background-color: #5a5a5a;
    color: #858585;
}
.tag-row {
    justify-content: flex-end;
    gap: 4px;
    margin-top: 4px;
}
.tag-row .sep {
    height: 18px;
    margin: 0 -4px 0 0;
}
.tag-row .active {
    width: 22px;
    height: 22px;
}
.playback {
    display: grid;
    grid-template-columns: 24px 2px 72px 2px 22px;
    grid-template-rows: 20px 18px;
    gap: 4px 1px;
    margin: 8px 12px 0 0;
    align-self: flex-start;
}
.playback > i {
    background-color: #2e2e2e;
}
.playback svg {
    width: 16px;
    height: 12px;
}
.playback .play {
    width: 14px;
    height: 14px;
}
.play-buttons {
    display: flex;
}
.play-buttons button {
    position: relative;
    width: 24px;
}
.frame {
    position: relative;
}
.frame input {
    width: 100%;
    height: 18px;
    padding-left: 3px;
    background-color: #626262;
}
.frame::before, .frame::after {
    content: "";
    position: absolute;
    right: 4px;
    top: 4px;
    border: solid transparent;
    border-width: 0 3px 4px;
    border-bottom-color: #ccc;
}
.frame::after {
    top: 10px;
    border-width: 4px 3px 0;
    border-top-color: #ccc;
}
.set-key {
    width: 41px;
    height: 44px;
    margin: 7px 6px 0 0;
    border-radius: 3px;
    background-color: #616161;
}
.set-key svg {
    width: 30px;
    height: 30px;
}
.key-modes {
    width: 306px;
    display: flex;
    flex-direction: column;
    gap: 3px;
    padding-top: 8px;
}
.key-modes button {
    width: 76px;
    height: 20px;
    justify-content: flex-start;
    padding-left: 2px;
    border-radius: 3px;
    background-color: #5c5c5c;
    font-size: 13px;
}

/* screen recorder, floats over the window */
.recorder {
    position: fixed;
    right: 7px;
    bottom: 6px;
    display: flex;
    align-items: center;
    justify-content: space-between;
    width: 246px;
    height: 52px;
    padding: 0 20px;
    border-radius: 4px;
    background-color: #e9ebea;
    color: #505050;
    font-family: "Open Sans", "Noto Sans CJK SC", sans-serif;
    font-size: 14px;
}
.limit {
    color: #a0a0a0;
}
.recorder button {
    width: 84px;
    height: 31px;
    border-radius: 4px;
    background-color: #e05236;
    color: #f4d8ce;
    font-size: 15px;
}
```
